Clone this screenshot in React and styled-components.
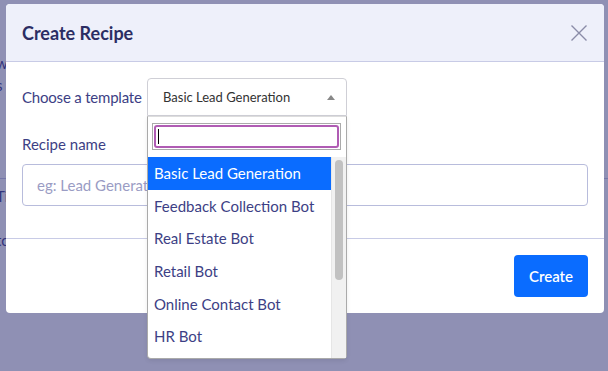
import React from "react";
import styled, { createGlobalStyle } from "styled-components";

const Global = createGlobalStyle`
  html, body { margin: 0; padding: 0; }
  body {
    width: 608px;
    height: 371px;
    overflow: hidden;
    font-family: Lato, "Noto Sans", sans-serif;
    background: #ffffff;
  }
`;

const Page = styled.div`
  position: relative;
  width: 608px;
  height: 371px;
  overflow: hidden;
`;

const BackText = styled.div`
  display: flex;
  flex-direction: column;
  gap: 8px;
  padding: 54px 0 0 0;
  margin-left: -4px;
  font-size: 15px;
  color: #3d3f8a;
`;

const BackLine = styled.div`
  height: ${({ h }) => h}px;
  border-bottom: ${({ rule }) => (rule ? "1px solid #c8cbe6" : "none")};
`;

const Overlay = styled.div`
  position: absolute;
  inset: 0;
  background: rgba(41, 43, 112, 0.52);
  padding: 4px 4px 0 6px;
`;

const Modal = styled.div`
  width: 598px;
  background: #fff;
  border-radius: 4px;
`;

const Header = styled.div`
  height: 57px;
  display: flex;
  align-items: center;
  justify-content: space-between;
  padding: 0 16px;
  background: #eef0fa;
  border-bottom: 1px solid #c8cbe6;
  border-radius: 4px 4px 0 0;
`;

const Title = styled.h2`
  margin: 0;
  font-size: 18px;
  font-weight: 700;
  color: #2b2d63;
`;

const Close = styled.button`
  border: none;
  background: transparent;
  padding: 0;
  width: 18px;
  height: 18px;
  display: flex;
`;

const Body = styled.div`
  padding: 16px 16px 32px 16px;
  border-bottom: 1px solid #c8cbe6;
`;

const Row = styled.div`
  display: flex;
  align-items: center;
`;

const Label = styled.label`
  font-size: 15px;
  color: #3d3f85;
`;

const RowLabel = styled(Label)`
  flex: 0 0 125px;
  letter-spacing: -0.2px;
`;

const SelectWrap = styled.div`
  position: relative;
  width: 200px;
`;

const SelectBox = styled.div`
  height: 36px;
  border: 1px solid #cfcfd6;
  border-radius: 4px 4px 0 0;
  display: flex;
  align-items: center;
  padding: 0 11px 0 15px;
  font-size: 13px;
  color: #333;
  white-space: nowrap;
`;

const Arrow = styled.span`
  margin-left: auto;
  width: 0;
  height: 0;
  border-left: 4px solid transparent;
  border-right: 4px solid transparent;
  border-bottom: 5px solid #888;
`;

const Dropdown = styled.div`
  position: absolute;
  top: 38px;
  left: 0;
  width: 200px;
  height: 243px;
  box-sizing: border-box;
  border: 1px solid #aaa;
  border-top: 1px solid #ddd;
  background: #fff;
  border-radius: 0 0 4px 4px;
  z-index: 5;
  display: flex;
  flex-direction: column;
  box-shadow: 0 2px 4px rgba(0, 0, 0, 0.08);
`;

const SearchArea = styled.div`
  padding: 6px 5px 7px 4px;
`;

const SearchBox = styled.div`
  border: 1px solid #aaa;
  height: 27px;
  box-sizing: border-box;
  padding: 1px;
`;

const SearchInner = styled.div`
  height: 100%;
  box-sizing: border-box;
  border: 2px solid #b05cb4;
  border-radius: 3px;
  display: flex;
  align-items: center;
  padding-left: 2px;
`;

const Caret = styled.span`
  width: 1px;
  height: 15px;
  background: #000;
`;

const ListArea = styled.div`
  flex: 1;
  display: flex;
  min-height: 0;
`;

const List = styled.ul`
  list-style: none;
  margin: 0;
  padding: 0;
  flex: 1;
  overflow: hidden;
`;

const Option = styled.li`
  height: 32.6px;
  display: flex;
  align-items: center;
  padding-left: 6px;
  font-size: 15px;
  color: ${({ active }) => (active ? "#fff" : "#3d3f85")};
  background: ${({ active }) => (active ? "#0a6cff" : "transparent")};
  white-space: nowrap;
`;

const Track = styled.div`
  width: 15px;
  background: #f1f1f1;
  border-left: 1px solid #e6e6e6;
  padding: 3px 3px 0 3px;
  box-sizing: border-box;
`;

const Thumb = styled.div`
  height: 120px;
  background: #c1c1c1;
  border-radius: 4px;
`;

const FieldLabel = styled(Label)`
  display: block;
  margin: 19px 0 11px;
`;

const Input = styled.input`
  width: 100%;
  box-sizing: border-box;
  height: 42px;
  border: 1px solid #b8bcdc;
  border-radius: 4px;
  padding: 0 14px;
  font-family: inherit;
  font-size: 15px;
  color: #3d3f85;
  &::placeholder {
    color: #9a9cc4;
  }
`;

const Footer = styled.div`
  display: flex;
  justify-content: flex-end;
  padding: 16px;
`;

const Button = styled.button`
  background: #0a6cff;
  color: #fff;
  border: none;
  border-radius: 4px;
  height: 42px;
  padding: 0 15px;
  font-family: inherit;
  font-size: 15px;
  font-weight: 600;
`;

const options = [
  "Basic Lead Generation",
  "Feedback Collection Bot",
  "Real Estate Bot",
  "Retail Bot",
  "Online Contact Bot",
  "HR Bot",
  "Restaurant Bot",
];

export default function App() {
  return (
    <Page>
      <Global />
      <BackText>
        <BackLine h={14}>w</BackLine>
        <BackLine h={14}>s</BackLine>
        <BackLine h={80} rule />
        <BackLine h={36}>Ti</BackLine>
        <BackLine h={20}>to</BackLine>
      </BackText>
      <Overlay>
        <Modal>
          <Header>
            <Title>Create Recipe</Title>
            <Close aria-label="close">
              <svg width="18" height="18" viewBox="0 0 18 18">
                <path d="M1.5 1.5 L16.5 16.5 M16.5 1.5 L1.5 16.5" stroke="#8a8ca8" strokeWidth="1.4" />
              </svg>
            </Close>
          </Header>
          <Body>
            <Row>
              <RowLabel>Choose a template</RowLabel>
              <SelectWrap>
                <SelectBox>
                  <span>Basic Lead Generation</span>
                  <Arrow />
                </SelectBox>
                <Dropdown>
                  <SearchArea>
                    <SearchBox>
                      <SearchInner>
                        <Caret />
                      </SearchInner>
                    </SearchBox>
                  </SearchArea>
                  <ListArea>
                    <List>
                      {options.map((o, i) => (
                        <Option key={o} active={i === 0}>
                          {o}
                        </Option>
                      ))}
                    </List>
                    <Track>
                      <Thumb />
                    </Track>
                  </ListArea>
                </Dropdown>
              </SelectWrap>
            </Row>
            <FieldLabel>Recipe name</FieldLabel>
            <Input placeholder="eg: Lead Generation" />
          </Body>
          <Footer>
            <Button>Create</Button>
          </Footer>
        </Modal>
      </Overlay>
    </Page>
  );
}
